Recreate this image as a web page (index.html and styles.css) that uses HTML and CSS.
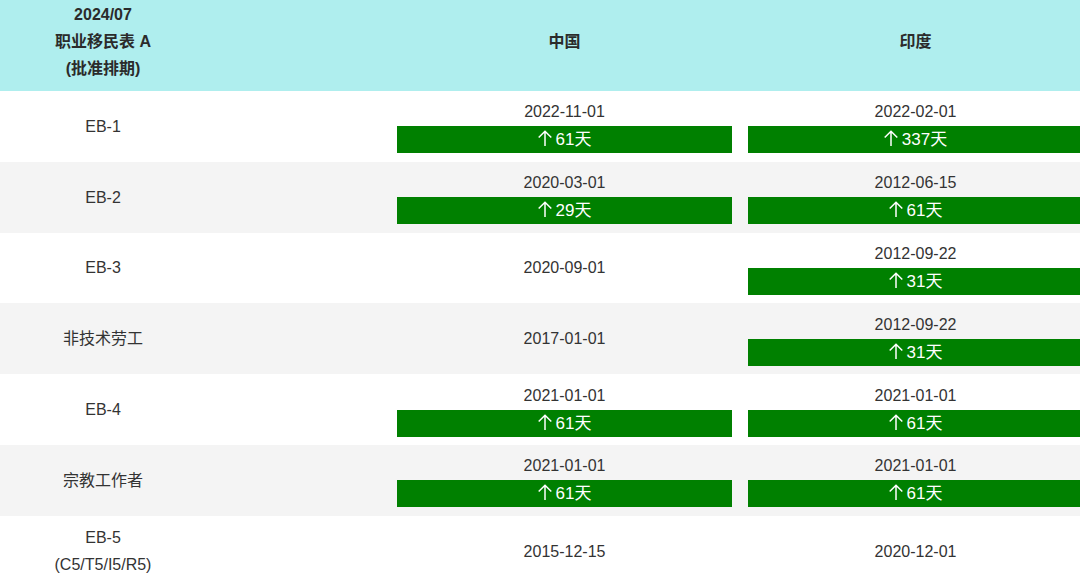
FILE: index.html
```html
<!DOCTYPE html>
<html lang="zh-CN">
<head>
    <meta charset="UTF-8">
    <meta name="viewport" content="width=device-width, initial-scale=1.0">
    <title>排期表</title>
    <link rel="stylesheet" href="styles.css">
</head>
<body>
    <svg width="0" height="0" style="position:absolute">
        <symbol id="up" viewBox="0 0 14 16">
            <path d="M7 1.2V16M0.7 7.5L7 1.2L13.3 7.5" fill="none" stroke="#fff" stroke-width="1.5"/>
        </symbol>
    </svg>
    <table class="bulletin">
        <colgroup>
            <col class="col-label">
            <col class="col-country">
            <col class="col-country">
        </colgroup>
        <thead>
            <tr>
                <th class="label">2024/07<br>职业移民表 A<br>(批准排期)</th>
                <th>中国</th>
                <th>印度</th>
            </tr>
        </thead>
        <tbody>
            <tr>
                <td class="label">EB-1</td>
                <td><span class="date">2022-11-01</span><span class="move"><svg class="up"><use href="#up"/></svg>61天</span></td>
                <td><span class="date">2022-02-01</span><span class="move"><svg class="up"><use href="#up"/></svg>337天</span></td>
            </tr>
            <tr>
                <td class="label">EB-2</td>
                <td><span class="date">2020-03-01</span><span class="move"><svg class="up"><use href="#up"/></svg>29天</span></td>
                <td><span class="date">2012-06-15</span><span class="move"><svg class="up"><use href="#up"/></svg>61天</span></td>
            </tr>
            <tr>
                <td class="label">EB-3</td>
                <td><span class="date">2020-09-01</span></td>
                <td><span class="date">2012-09-22</span><span class="move"><svg class="up"><use href="#up"/></svg>31天</span></td>
            </tr>
            <tr>
                <td class="label">非技术劳工</td>
                <td><span class="date">2017-01-01</span></td>
                <td><span class="date">2012-09-22</span><span class="move"><svg class="up"><use href="#up"/></svg>31天</span></td>
            </tr>
            <tr>
                <td class="label">EB-4</td>
                <td><span class="date">2021-01-01</span><span class="move"><svg class="up"><use href="#up"/></svg>61天</span></td>
                <td><span class="date">2021-01-01</span><span class="move"><svg class="up"><use href="#up"/></svg>61天</span></td>
            </tr>
            <tr>
                <td class="label">宗教工作者</td>
                <td><span class="date">2021-01-01</span><span class="move"><svg class="up"><use href="#up"/></svg>61天</span></td>
                <td><span class="date">2021-01-01</span><span class="move"><svg class="up"><use href="#up"/></svg>61天</span></td>
            </tr>
            <tr>
                <td class="label">EB-5<br>(C5/T5/I5/R5)</td>
                <td><span class="date">2015-12-15</span></td>
                <td><span class="date">2020-12-01</span></td>
            </tr>
        </tbody>
    </table>
</body>
</html>
```

FILE: styles.css
```css
html, body {
    margin: 0;
    padding: 0;
    overflow: hidden;
}
body {
    font-family: "Liberation Sans", Arial, "Noto Sans CJK SC", sans-serif;
    font-size: 16px;
    color: #333;
    background-color: #fff;
}
.bulletin {
    width: 1091px;
    table-layout: fixed;
    border-collapse: collapse;
}
.col-label {
    width: 389px;
}
.col-country {
    width: 351px;
}
.bulletin th,
.bulletin td {
    padding: 0 8px;
    text-align: center;
    vertical-align: middle;
}
.bulletin thead tr {
    height: 91px;
    background-color: #afeeee;
}
.bulletin th {
    font-weight: bold;
    line-height: 27px;
    color: #2b2b2b;
    padding-bottom: 8px;
}
.bulletin tbody tr {
    height: 70.8px;
}
.bulletin tbody tr:nth-child(even) {
    background-color: #f4f4f4;
}
/* first column text sits in the left part of its column */
.bulletin .label {
    padding-right: 191px;
    line-height: 27px;
}
.date {
    display: block;
    line-height: 24px;
    padding-top: 1px;
}
.move {
    display: block;
    height: 27px;
    line-height: 27px;
    margin-top: 2px;
    background-color: #008000;
    color: #fff;
    font-size: 17px;
}
.up {
    width: 14px;
    height: 16px;
    margin-right: 4px;
    vertical-align: -1px;
}
```
